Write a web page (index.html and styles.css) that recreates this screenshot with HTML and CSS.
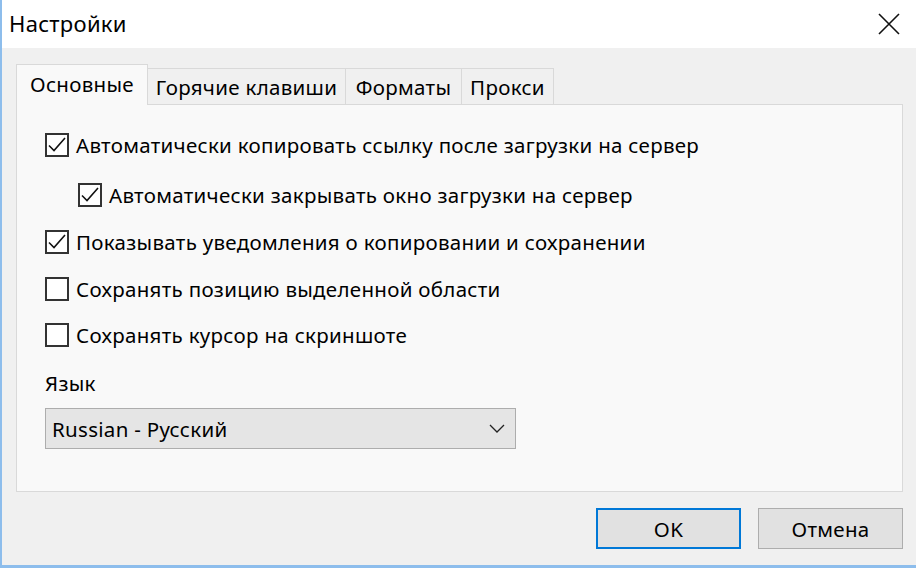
FILE: index.html
```html
<!DOCTYPE html>
<html lang="ru">
<head>
<meta charset="utf-8">
<title>Настройки</title>
<link rel="stylesheet" href="styles.css">
</head>
<body>
<div class="window">
  <div class="titlebar">
    <span class="title">Настройки</span>
    <span class="close">
      <svg width="22" height="22" viewBox="0 0 22 22"><path d="M1 1 L21 21 M21 1 L1 21" stroke="#111" stroke-width="1.6" fill="none"/></svg>
    </span>
  </div>
  <div class="body">
    <div class="tabs">
      <div class="tab active t1">Основные</div>
      <div class="tab t2">Горячие клавиши</div>
      <div class="tab t3">Форматы</div>
      <div class="tab t4">Прокси</div>
    </div>
    <div class="panel">
      <label class="row r1"><span class="cb checked"><svg width="24" height="24" viewBox="0 0 24 24"><polyline points="4,12.5 9,17.5 20,5" stroke="#111" stroke-width="1.6" fill="none"/></svg></span><span class="lbl">Автоматически копировать ссылку после загрузки на сервер</span></label>
      <label class="row r2 indent"><span class="cb checked"><svg width="24" height="24" viewBox="0 0 24 24"><polyline points="4,12.5 9,17.5 20,5" stroke="#111" stroke-width="1.6" fill="none"/></svg></span><span class="lbl">Автоматически закрывать окно загрузки на сервер</span></label>
      <label class="row r3"><span class="cb checked"><svg width="24" height="24" viewBox="0 0 24 24"><polyline points="4,12.5 9,17.5 20,5" stroke="#111" stroke-width="1.6" fill="none"/></svg></span><span class="lbl">Показывать уведомления о копировании и сохранении</span></label>
      <label class="row r4"><span class="cb"></span><span class="lbl">Сохранять позицию выделенной области</span></label>
      <label class="row r5"><span class="cb"></span><span class="lbl">Сохранять курсор на скриншоте</span></label>
      <div class="lang-label">Язык</div>
      <div class="select">
        <span class="select-text">Russian - Русский</span>
        <svg class="chev" width="16" height="9" viewBox="0 0 16 9"><polyline points="1,1 8,8 15,1" stroke="#222" stroke-width="1.3" fill="none"/></svg>
      </div>
    </div>
    <div class="buttons">
      <div class="btn ok">OK</div>
      <div class="btn">Отмена</div>
    </div>
  </div>
</div>
</body>
</html>
```
FILE: styles.css
```css
html, body {
  margin: 0;
  padding: 0;
}
body {
  width: 916px;
  height: 568px;
  overflow: hidden;
  font-family: "Noto Sans", "Open Sans", sans-serif;
  color: #000;
}
.window {
  width: 914px;
  height: 565px;
  border-left: 2px solid #8dbdec;
  border-bottom: 3px solid #8dbdec;
  background: #f0f0f0;
  display: flex;
  flex-direction: column;
}
.titlebar {
  height: 48px;
  background: #ffffff;
  display: flex;
  align-items: center;
  justify-content: space-between;
  padding: 0 16px 0 7px;
}
.title {
  font-size: 22px;
  letter-spacing: 0.3px;
  margin-top: -2px;
}
.close {
  display: flex;
  margin-top: -1px;
}
.body {
  padding: 16px 13px 0 14px;
  display: flex;
  flex-direction: column;
}
.tabs {
  display: flex;
  align-items: flex-end;
  height: 40px;
  position: relative;
  z-index: 1;
}
.tab {
  height: 36px;
  box-sizing: border-box;
  border: 1px solid #d9d9d9;
  border-bottom: none;
  border-left: none;
  background: #f0f0f0;
  font-size: 20.5px;
  letter-spacing: 0.3px;
  display: flex;
  align-items: center;
  justify-content: center;
  padding-top: 1px;
}
.t1 { width: 132px; }
.t2 { width: 198px; }
.t3 { width: 116px; }
.t4 { width: 92px; }
.tab.active {
  border-left: 1px solid #d9d9d9;
  background: #f9f9f9;
  padding: 0 0 3px 0;
  margin-bottom: -1px;
  height: 41px;
}
.panel {
  height: 388px;
  box-sizing: border-box;
  border: 1px solid #d9d9d9;
  background: #f9f9f9;
  padding: 27px 0 0 28px;
  display: flex;
  flex-direction: column;
  align-items: flex-start;
}
.row {
  display: flex;
  align-items: center;
  height: 26px;
  gap: 7px;
}
.r2 { margin-top: 24px; }
.r3 { margin-top: 21px; }
.r4 { margin-top: 21px; }
.r5 { margin-top: 20px; }
.indent { margin-left: 33px; }
.cb {
  width: 24px;
  height: 24px;
  box-sizing: border-box;
  border: 2px solid #333;
  background: #fff;
  display: flex;
  position: relative;
}
.cb svg {
  position: absolute;
  left: -2px;
  top: -2px;
}
.lbl {
  font-size: 20.5px;
  letter-spacing: 0.3px;
}
.lang-label {
  margin-top: 22px;
  font-size: 20.5px;
  letter-spacing: 0.3px;
  line-height: 26px;
}
.select {
  margin-top: 12px;
  width: 471px;
  height: 41px;
  box-sizing: border-box;
  border: 1px solid #adadad;
  background: #e5e5e5;
  display: flex;
  align-items: center;
  justify-content: space-between;
  padding: 0 10px 0 6px;
}
.select-text {
  font-size: 20.5px;
  letter-spacing: 0.3px;
}
.buttons {
  display: flex;
  justify-content: flex-end;
  gap: 17px;
  margin-top: 16px;
}
.btn {
  width: 145px;
  height: 41px;
  box-sizing: border-box;
  border: 1px solid #adadad;
  background: #e1e1e1;
  display: flex;
  align-items: center;
  justify-content: center;
  font-size: 20.5px;
  letter-spacing: 0.3px;
}
.btn.ok {
  border: 2px solid #0078d7;
}
```
